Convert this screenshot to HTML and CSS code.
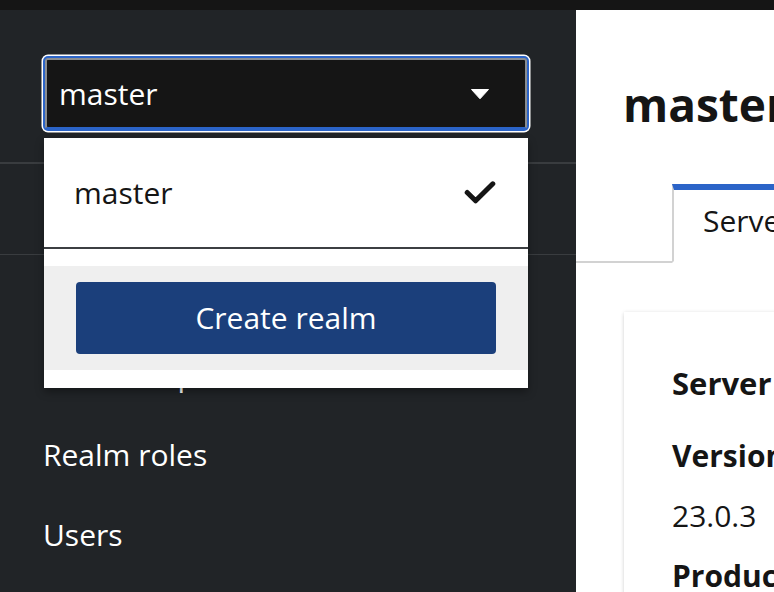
FILE: index.html
```html
<!DOCTYPE html>
<html lang="en">
<head>
<meta charset="utf-8">
<title>Keycloak - master</title>
<link rel="stylesheet" href="styles.css">
</head>
<body>
<div class="topbar"></div>
<div class="layout">
  <aside class="sidebar">
    <div class="realm-section">
      <button class="realm-toggle" type="button">
        <span class="realm-toggle-text">master</span>
        <svg class="caret" width="18" height="10" viewBox="0 0 18 10" aria-hidden="true"><polygon points="0.5,0.5 17.5,0.5 9,9.8" fill="#ffffff" stroke="#ffffff" stroke-width="1" stroke-linejoin="round"/></svg>
      </button>
      <div class="realm-menu">
        <div class="menu-item">
          <span>master</span>
          <svg class="check" width="32" height="24" viewBox="0 0 32 24" aria-hidden="true"><polyline points="3.2,11.5 11.6,19.8 28.8,2.8" fill="none" stroke="#151515" stroke-width="5" stroke-linecap="round" stroke-linejoin="round"/></svg>
        </div>
        <div class="menu-footer">
          <div class="menu-footer-inner">
            <button class="btn-primary" type="button">Create realm</button>
          </div>
        </div>
      </div>
    </div>
    <div class="sidebar-section"></div>
    <nav class="nav">
      <a class="nav-link">Clients</a>
      <a class="nav-link">Client scopes</a>
      <a class="nav-link">Realm roles</a>
      <a class="nav-link">Users</a>
    </nav>
  </aside>
  <main class="main">
    <div class="main-inner">
      <h1 class="page-title">master</h1>
      <div class="tabs">
        <div class="tab-spacer"></div>
        <div class="tab active">Server info</div>
      </div>
      <section class="card">
        <h2 class="card-title">Server info</h2>
        <div class="field-label">Version</div>
        <div class="field-value">23.0.3</div>
        <div class="field-label">Product</div>
      </section>
    </div>
  </main>
</div>
</body>
</html>
```
FILE: styles.css
```css
* { box-sizing: border-box; }

html, body {
  margin: 0;
  padding: 0;
  width: 774px;
  height: 592px;
  overflow: hidden;
  font-family: "Open Sans", "Noto Sans", sans-serif;
  font-size: 30px;
  line-height: 40px;
  color: #151515;
  background: #ffffff;
}

.topbar {
  height: 10px;
  background: #151515;
}

.layout {
  display: flex;
  height: 582px;
  overflow: hidden;
}

.sidebar {
  flex: 0 0 576px;
  background: #212427;
  color: #ffffff;
  display: flex;
  flex-direction: column;
  overflow: hidden;
}

.sidebar > * { flex-shrink: 0; }

.realm-section {
  position: relative;
  padding: 48px 0 33px;
  border-bottom: 2px solid #393c3f;
  z-index: 2;
}

.realm-toggle {
  display: flex;
  align-items: center;
  justify-content: space-between;
  margin-left: 45px;
  width: 482px;
  height: 71px;
  padding: 0 36px 0 12px;
  background: #151515;
  color: #ffffff;
  font: inherit;
  border: 2px solid #8a8d90;
  border-bottom-color: #2b64c8;
  border-radius: 3px;
  box-shadow: 0 0 0 2px #2b64c8, 0 0 0 3.5px #ffffff;
  text-align: left;
}

.realm-toggle-text { line-height: 40px; }

.caret { display: block; }

.realm-menu {
  position: absolute;
  top: 128px;
  left: 44px;
  width: 484px;
  height: 250px;
  background: #ffffff;
  color: #151515;
  box-shadow: 0 4px 8px rgba(3, 3, 3, 0.35);
}

.menu-item {
  display: flex;
  align-items: center;
  justify-content: space-between;
  height: 111px;
  padding: 0 32px 0 30px;
  border-bottom: 2px solid #3c3f42;
}

.check { display: block; }

.menu-footer {
  padding: 17px 0 16px;
}

.menu-footer-inner {
  background: #efefef;
  padding: 16px 32px;
}

.btn-primary {
  display: block;
  width: 100%;
  height: 72px;
  border: 0;
  border-radius: 4px;
  background: #1b3f7b;
  color: #ffffff;
  font: inherit;
  line-height: 40px;
}

.sidebar-section {
  height: 91px;
  border-bottom: 1px solid #393c3f;
}

.nav {
  display: flex;
  flex-direction: column;
}

.nav-link {
  display: block;
  flex-shrink: 0;
  line-height: 80px;
  padding-left: 43px;
  color: #ffffff;
  white-space: nowrap;
}

.main {
  flex: 1 1 auto;
  min-width: 0;
  overflow: hidden;
  background: #ffffff;
}

.main-inner {
  width: 700px;
  padding-top: 64px;
}

.page-title {
  margin: 0 0 50px;
  padding-left: 47px;
  font-size: 46px;
  line-height: 60px;
  font-weight: 700;
  white-space: nowrap;
}

.tabs {
  display: flex;
  white-space: nowrap;
}

.tab-spacer {
  flex: 0 0 96px;
  border-bottom: 2px solid #d2d2d2;
}

.tab {
  padding: 11px 32px 20px 29px;
  border-top: 6px solid transparent;
  border-bottom: 2px solid #d2d2d2;
}

.tab.active {
  border-top-color: #2b64c8;
  border-left: 2px solid #d2d2d2;
  border-right: 2px solid #d2d2d2;
  border-bottom-color: transparent;
}

.card {
  margin: 49px 0 0 48px;
  width: 600px;
  padding: 51px 48px 0;
  background: #ffffff;
  box-shadow: 0 2px 4px rgba(3, 3, 3, 0.12), 0 0 4px rgba(3, 3, 3, 0.08);
  height: 400px;
}

.card-title {
  margin: 0;
  font-size: 31px;
  line-height: 40px;
  font-weight: 700;
}

.field-label {
  margin-top: 33px;
  font-weight: 700;
}

.field-value {
  margin-top: 20px;
}

.field-value + .field-label {
  margin-top: 20px;
}
```
